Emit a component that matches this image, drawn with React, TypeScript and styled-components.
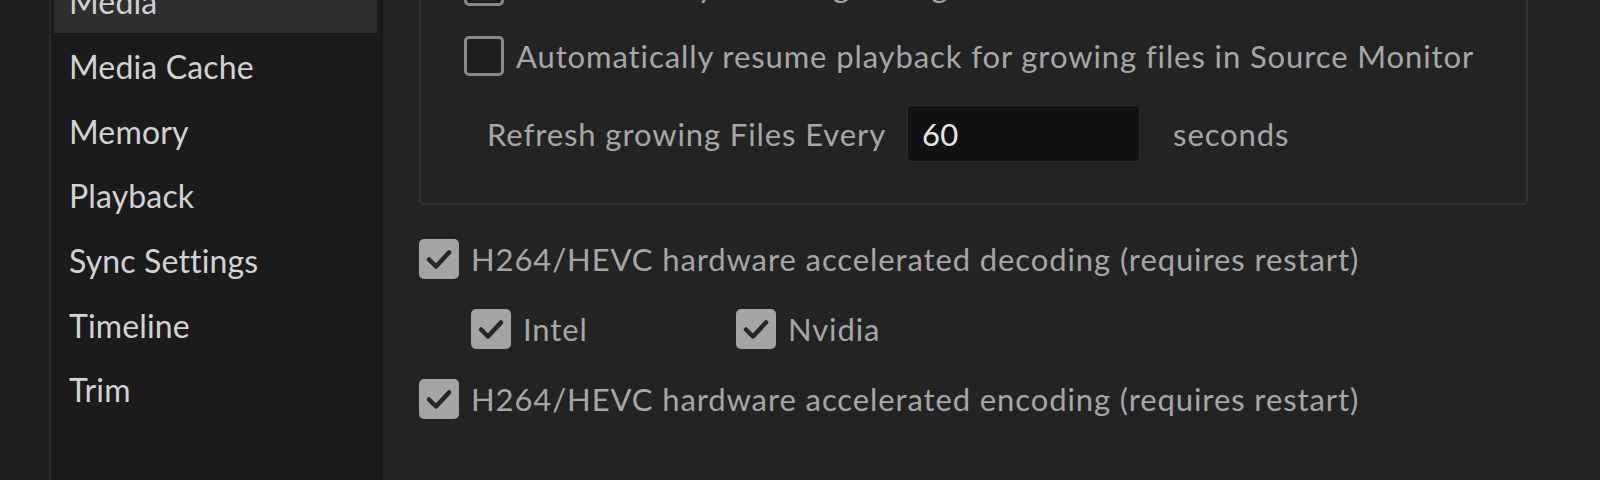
import React from "react";
import styled, { createGlobalStyle } from "styled-components";

const GlobalStyle = createGlobalStyle`
  html, body {
    margin: 0;
    padding: 0;
    background: #1f1f1f;
    font-family: Lato, "Open Sans", sans-serif;
  }
`;

const Page = styled.div`
  display: grid;
  grid-template-columns: 49px 2px 329px 3px 1fr;
  height: 480px;
  overflow: hidden;
  background: #1f1f1f;
`;

const LeftStrip = styled.div`
  background: #1f1f1f;
`;

const Divider = styled.div<{ $color: string }>`
  background: ${(p) => p.$color};
`;

const Sidebar = styled.nav`
  background: #1b1b1b;
  padding: 0 3px;
  display: flex;
  flex-direction: column;
  margin-top: -32px;
`;

const NavItem = styled.div<{ $selected?: boolean }>`
  height: 64.7px;
  display: flex;
  align-items: center;
  padding: 3px 0 0 15px;
  box-sizing: border-box;
  font-size: 32px;
  letter-spacing: 0.15px;
  color: #d3d3d3;
  background: ${(p) => (p.$selected ? "#2e2e2e" : "transparent")};
`;

const Main = styled.main`
  background: #232323;
  padding-left: 36px;
  display: flex;
  flex-direction: column;
  gap: 28px;
  font-size: 31px;
  letter-spacing: 0.9px;
  color: #a7a7a7;
`;

const GroupBox = styled.section`
  margin: -57px 72px 5px 0;
  border: 2px solid #313131;
  border-radius: 5px;
  padding: 20px 0 41px 43px;
  display: flex;
  flex-direction: column;
  gap: 28px;
`;

const Row = styled.div`
  height: 42px;
  display: flex;
  align-items: center;
  gap: 12px;
  white-space: nowrap;
`;

const SubOptions = styled.div`
  height: 42px;
  padding-left: 52px;
  display: grid;
  grid-template-columns: 265px auto;
  align-items: center;
`;

const InputRow = styled.div`
  height: 57px;
  display: flex;
  align-items: center;
  padding-left: 23px;
  white-space: nowrap;
`;

const Field = styled.div`
  width: 233px;
  height: 57px;
  box-sizing: border-box;
  margin: 0 33px 0 21px;
  background: #111111;
  border: 1px solid #2e2e2e;
  border-radius: 5px;
  padding-left: 14px;
  display: flex;
  align-items: center;
  color: #e8e8e8;
  letter-spacing: 0.3px;
`;

const Box = styled.span<{ $checked?: boolean }>`
  flex: none;
  width: 40px;
  height: 40px;
  box-sizing: border-box;
  border-radius: 5px;
  display: inline-flex;
  align-items: center;
  justify-content: center;
  background: ${(p) => (p.$checked ? "#a4a4a4" : "#1f1f1f")};
  border: ${(p) => (p.$checked ? "none" : "3px solid #8a8a8a")};
`;

const Check = ({ checked }: { checked?: boolean }) => (
  <Box $checked={checked}>
    {checked && (
      <svg width="40" height="40" viewBox="0 0 40 40">
        <polyline
          points="10,20.5 17,27.5 30,13.5"
          fill="none"
          stroke="#262626"
          strokeWidth="4.5"
          strokeLinecap="round"
          strokeLinejoin="round"
        />
      </svg>
    )}
  </Box>
);

const Option = ({ checked, label }: { checked?: boolean; label: string }) => (
  <Row>
    <Check checked={checked} />
    <span>{label}</span>
  </Row>
);

const items = ["Media", "Media Cache", "Memory", "Playback", "Sync Settings", "Timeline", "Trim"];

export default function App() {
  return (
    <>
      <GlobalStyle />
      <Page>
        <LeftStrip />
        <Divider $color="#2a2a2a" />
        <Sidebar>
          {items.map((it, i) => (
            <NavItem key={it} $selected={i === 0}>
              {it}
            </NavItem>
          ))}
        </Sidebar>
        <Divider $color="#191919" />
        <Main>
          <GroupBox>
            <Option label="Automatically refresh growing files" />
            <Option label="Automatically resume playback for growing files in Source Monitor" />
            <InputRow>
              <span>Refresh growing Files Every</span>
              <Field>60</Field>
              <span>seconds</span>
            </InputRow>
          </GroupBox>
          <Option checked label="H264/HEVC hardware accelerated decoding (requires restart)" />
          <SubOptions>
            <Row>
              <Check checked />
              <span>Intel</span>
            </Row>
            <Row>
              <Check checked />
              <span>Nvidia</span>
            </Row>
          </SubOptions>
          <Option checked label="H264/HEVC hardware accelerated encoding (requires restart)" />
        </Main>
      </Page>
    </>
  );
}
